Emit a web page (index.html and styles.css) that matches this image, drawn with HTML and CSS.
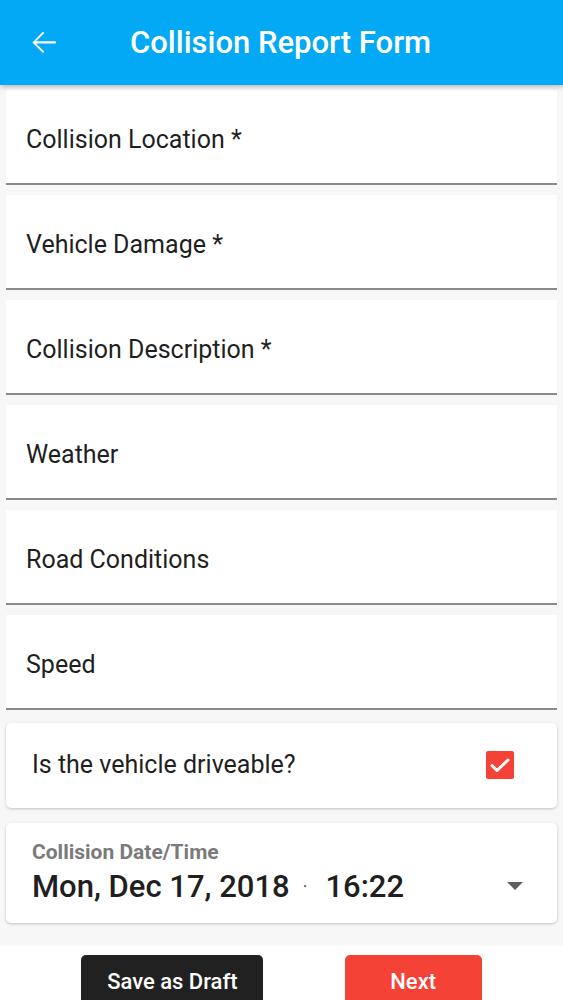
FILE: index.html
```html
<!DOCTYPE html>
<html lang="en">
<head>
<meta charset="utf-8">
<title>Collision Report Form</title>
<link rel="stylesheet" href="styles.css">
</head>
<body>
<header class="appbar">
  <svg class="back" viewBox="0 0 24 24" width="37" height="37" aria-hidden="true">
    <path d="M20 11.2H7.2l5.3-5.3-0.9-0.9L4.8 12l6.8 6.8 0.9-0.9-5.3-5.3H20z" fill="#fff"/>
  </svg>
  <h1 class="title">Collision Report Form</h1>
</header>
<main class="content">
  <div class="field">Collision Location *</div>
  <div class="field">Vehicle Damage *</div>
  <div class="field">Collision Description *</div>
  <div class="field">Weather</div>
  <div class="field">Road Conditions</div>
  <div class="field">Speed</div>
  <div class="card check-card">
    <span class="check-label">Is the vehicle driveable?</span>
    <span class="checkbox">
      <svg viewBox="0 0 28 28" width="28" height="28" aria-hidden="true">
        <path d="M6 14.5l5 5L22 9" fill="none" stroke="#fff" stroke-width="3" stroke-linecap="round" stroke-linejoin="round"/>
      </svg>
    </span>
  </div>
  <div class="card date-card">
    <div class="date-label">Collision Date/Time</div>
    <div class="date-row">
      <span class="date-value">Mon, Dec 17, 2018</span>
      <span class="dot">·</span>
      <span class="date-value">16:22</span>
      <span class="caret"></span>
    </div>
  </div>
</main>
<footer class="actions">
  <button class="btn btn-draft">Save as Draft</button>
  <button class="btn btn-next">Next</button>
</footer>
</body>
</html>
```

FILE: styles.css
```css
* { box-sizing: border-box; }

body {
  margin: 0;
  background: #f7f7f7;
  font-family: Roboto, "Noto Sans", "Liberation Sans", sans-serif;
  color: #212121;
}

.appbar {
  height: 85px;
  background: #03a9f4;
  display: flex;
  align-items: center;
  padding-left: 25px;
  box-shadow: 0 2px 5px rgba(0, 0, 0, 0.25);
  position: relative;
  z-index: 1;
}

.back {
  display: block;
  margin-top: -1px;
}

.title {
  margin: 0 0 0 68px;
  color: #fff;
  font-size: 31px;
  font-weight: 500;
  letter-spacing: 0;
}

.content {
  padding: 5px 6px 0;
}

.field {
  background: #fff;
  height: 95px;
  border-bottom: 2px solid #8a8a8a;
  margin-bottom: 10px;
  display: flex;
  align-items: center;
  padding: 6px 20px 0;
  font-size: 25px;
  color: #1f1f1f;
}

.field:nth-of-type(6) {
  margin-bottom: 13px;
}

.card {
  background: #fff;
  border-radius: 5px;
  box-shadow: 0 1px 3px rgba(0, 0, 0, 0.22);
}

.check-card {
  height: 85px;
  display: flex;
  align-items: center;
  justify-content: space-between;
  padding: 0 43px 2px 26px;
  margin-bottom: 15px;
}

.check-label {
  font-size: 25px;
  color: #1f1f1f;
}

.checkbox {
  width: 28px;
  height: 28px;
  background: #f44336;
  border-radius: 2px;
  display: flex;
  align-items: center;
  justify-content: center;
}

.date-card {
  height: 100px;
  padding: 17px 34px 0 26px;
}

.date-label {
  font-size: 21px;
  font-weight: 700;
  color: #7a7a7a;
  line-height: 24px;
}

.date-row {
  display: flex;
  align-items: center;
  margin-top: 2px;
  height: 40px;
}

.date-value {
  font-size: 31px;
  font-weight: 500;
  color: #1f1f1f;
}

.dot {
  font-size: 18px;
  color: #555;
  margin: 0 18px 0 13px;
}

.caret {
  margin-left: auto;
  width: 0;
  height: 0;
  border-left: 8px solid transparent;
  border-right: 8px solid transparent;
  border-top: 8px solid #5f5f5f;
}

.actions {
  margin-top: 23px;
  background: #fff;
  padding: 9px 0 20px;
  display: flex;
  justify-content: space-evenly;
}

.btn {
  height: 56px;
  border: none;
  border-radius: 5px;
  color: #fff;
  font-family: Roboto, "Noto Sans", "Liberation Sans", sans-serif;
  font-size: 22px;
  font-weight: 500;
  padding: 0 0 3px;
}

.btn-draft {
  width: 182px;
  background: #212121;
}

.btn-next {
  width: 137px;
  background: #f44336;
}
```
